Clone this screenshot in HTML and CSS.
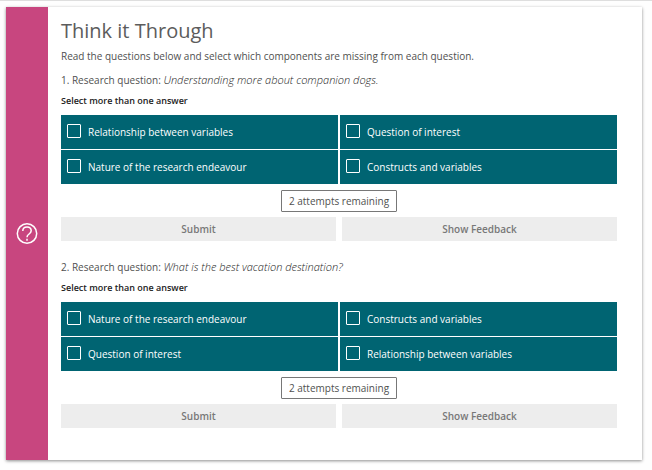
FILE: index.html
```html
<!DOCTYPE html>
<html lang="en">
<head>
<meta charset="utf-8">
<meta name="viewport" content="width=device-width, initial-scale=1">
<title>Think it Through</title>
<link rel="stylesheet" href="styles.css">
</head>
<body>
<main class="card">
  <div class="rail">
    <svg class="rail-icon" viewBox="0 0 22 22" aria-hidden="true">
      <circle cx="11" cy="10.500" r="9.700"/>
      <path d="M6.800 8C6.800 5.500 8.500 4 11 4s4.200 1.500 4.200 3.800c0 3.300-4.200 3.100-4.200 6.400"/>
      <path d="M11 15.800v1.900"/>
    </svg>
  </div>
  <div class="content">
    <h1 class="title">Think it Through</h1>
    <p class="text">Read the questions below and select which components are missing from each question.</p>

    <form class="question">
      <p class="text">1. Research question: <em>Understanding more about companion dogs.</em></p>
      <p class="hint">Select more than one answer</p>
      <div class="options">
        <label class="option"><input class="box" type="checkbox"><span>Relationship between variables</span></label>
        <label class="option"><input class="box" type="checkbox"><span>Question of interest</span></label>
        <label class="option"><input class="box" type="checkbox"><span>Nature of the research endeavour</span></label>
        <label class="option"><input class="box" type="checkbox"><span>Constructs and variables</span></label>
      </div>
      <p class="attempts">2 attempts remaining</p>
      <div class="actions">
        <button class="action" type="button" disabled>Submit</button>
        <button class="action" type="button" disabled>Show Feedback</button>
      </div>
    </form>

    <form class="question">
      <p class="text">2. Research question: <em>What is the best vacation destination?</em></p>
      <p class="hint">Select more than one answer</p>
      <div class="options">
        <label class="option"><input class="box" type="checkbox"><span>Nature of the research endeavour</span></label>
        <label class="option"><input class="box" type="checkbox"><span>Constructs and variables</span></label>
        <label class="option"><input class="box" type="checkbox"><span>Question of interest</span></label>
        <label class="option"><input class="box" type="checkbox"><span>Relationship between variables</span></label>
      </div>
      <p class="attempts">2 attempts remaining</p>
      <div class="actions">
        <button class="action" type="button" disabled>Submit</button>
        <button class="action" type="button" disabled>Show Feedback</button>
      </div>
    </form>
  </div>
</main>
</body>
</html>
```
FILE: styles.css
```css
* {
  box-sizing: border-box;
}

body {
  margin: 0;
  padding: 6px 10px 10px 6px;
  border-top: 1px solid #dedede;
  background: #fefefe;
  color: #505050;
  font-family: "Open Sans", "Noto Sans", sans-serif;
  font-size: 10px;
  line-height: 16px;
}

h1,
p {
  margin: 0;
}

.card {
  display: flex;
  background: #fff;
  box-shadow: 0 1px 3px rgba(0, 0, 0, 0.45);
}

.rail {
  display: flex;
  flex: 0 0 42px;
  align-items: center;
  justify-content: center;
  background: #c8467f;
}

.rail-icon {
  width: 22px;
  height: 22px;
  fill: none;
  stroke: #fff;
  stroke-width: 1.5;
}

.content {
  flex: 1;
  padding: 10px 25px 32px 13px;
}

.title {
  margin-bottom: 3px;
  color: #5c5c5c;
  font-size: 20px;
  font-weight: 400;
  line-height: 28px;
}

.text em {
  color: #222;
  font-size: 11px;
  font-weight: 300;
  line-height: 1;
}

.question {
  padding-top: 8px;
}

.question + .question {
  padding-top: 18px;
}

.hint {
  margin: 5px 0 6px;
  color: #222;
  font-size: 9px;
  font-weight: 600;
}

.options {
  display: grid;
  grid-template-columns: 1fr 1fr;
  grid-auto-rows: 34px;
  gap: 1px 2px;
}

.option {
  display: flex;
  align-items: center;
  gap: 7px;
  padding: 0 6px;
  background: #006472;
  color: #fff;
  font-weight: 500;
}

.box {
  appearance: none;
  width: 14px;
  height: 14px;
  margin: 0 0 2px;
  border: 1px solid #fff;
  border-radius: 1px;
}

.attempts {
  width: fit-content;
  margin: 6px auto 5px;
  padding: 2px 7px;
  border: 1px solid #777;
  border-radius: 1px;
}

.actions {
  display: grid;
  grid-template-columns: 1fr 1fr;
  gap: 6px;
}

.action {
  height: 24px;
  padding: 0;
  border: 0;
  background: #ededed;
  color: #787878;
  font: inherit;
  font-weight: 600;
}
```
